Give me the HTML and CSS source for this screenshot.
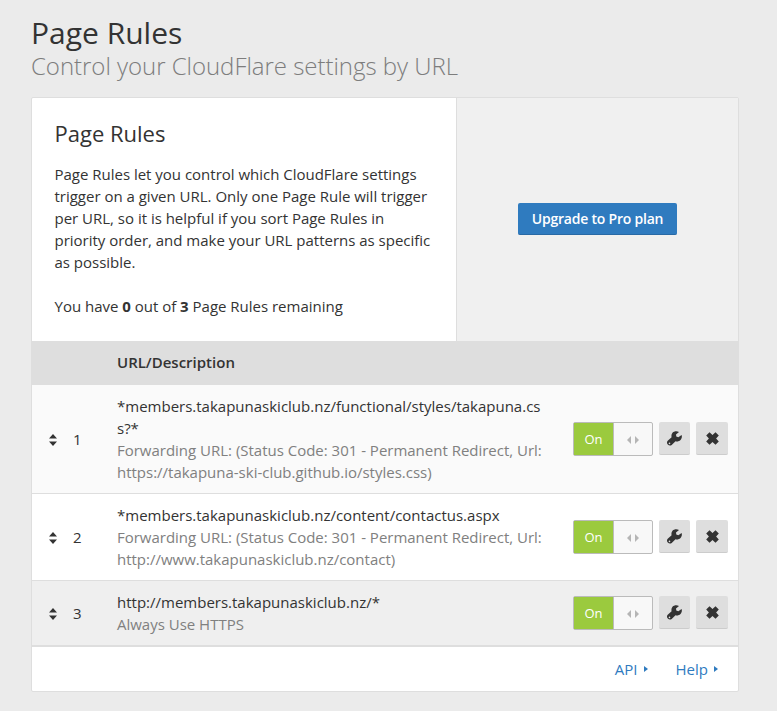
FILE: index.html
```html
<!DOCTYPE html>
<html lang="en">
<head>
<meta charset="utf-8">
<title>Page Rules</title>
<link rel="stylesheet" href="styles.css">
</head>
<body>
<svg class="defs" width="0" height="0">
  <symbol id="sort" viewBox="0 0 8 12"><path d="M0 4.500 4 0l4 4.500zM0 7.500h8l-4 4.500z"/></symbol>
  <symbol id="slide" viewBox="0 0 12 8"><path d="M4 0v8L0 4zM8 0v8l4-4z"/></symbol>
  <symbol id="caret" viewBox="0 0 4 6"><path d="M0 0v6l4-3z"/></symbol>
  <symbol id="wrench" viewBox="0 0 15 15"><path d="M14.600 3.900 11.300 6.300 9.300 5.500 9 3.600 12 .9C9.700-.2 7 .1 5.500 1.800 4.400 3.100 4.200 4.700 4.600 6.200L.7 9.800C-.3 10.800-.2 12.500.8 13.600 1.900 14.800 3.600 14.900 4.700 13.900L8.500 10.300C10.300 10.800 12.200 10.300 13.500 9 14.800 7.600 15.200 5.700 14.600 3.900zM2.500 11.600a.8.8 0 1 1 0 1.600.8.8 0 0 1 0-1.600z" fill-rule="evenodd"/></symbol>
  <symbol id="remove" viewBox="0 0 13 13"><path d="M3.500.2 6.500 2.900 9.500.2l3.300 3.300-2.700 3 2.700 3-3.300 3.300-3-2.700-3 2.700L.2 9.500l2.700-3-2.700-3z"/></symbol>
</svg>
<header class="page-head">
  <h1>Page Rules</h1>
  <p>Control your CloudFlare settings by URL</p>
</header>
<main class="card">
  <section class="intro">
    <div class="intro-text">
      <h2>Page Rules</h2>
      <p>Page Rules let you control which CloudFlare settings trigger on a given URL. Only one Page Rule will trigger per URL, so it is helpful if you sort Page Rules in priority order, and make your URL patterns as specific as possible.</p>
      <p>You have <b>0</b> out of <b>3</b> Page Rules remaining</p>
    </div>
    <div class="intro-action"><button class="upgrade">Upgrade to Pro plan</button></div>
  </section>
  <div class="rules">
    <div class="rules-head">URL/Description</div>
    <div class="rule first">
      <svg class="sort"><use href="#sort"/></svg><span class="num">1</span>
      <div class="desc"><div>*members.takapunaskiclub.nz/functional/styles/takapuna.css?*</div><div class="muted">Forwarding URL: (Status Code: 301 - Permanent Redirect, Url: https://takapuna-ski-club.github.io/styles.css)</div></div>
      <div class="toggle"><span class="on">On</span><span class="knob"><svg><use href="#slide"/></svg></span></div>
      <button class="tool edit"><svg class="wrench"><use href="#wrench"/></svg></button>
      <button class="tool del"><svg class="remove"><use href="#remove"/></svg></button>
    </div>
    <div class="rule">
      <svg class="sort"><use href="#sort"/></svg><span class="num">2</span>
      <div class="desc"><div>*members.takapunaskiclub.nz/content/contactus.aspx</div><div class="muted">Forwarding URL: (Status Code: 301 - Permanent Redirect, Url: http://www.takapunaskiclub.nz/contact)</div></div>
      <div class="toggle"><span class="on">On</span><span class="knob"><svg><use href="#slide"/></svg></span></div>
      <button class="tool edit"><svg class="wrench"><use href="#wrench"/></svg></button>
      <button class="tool del"><svg class="remove"><use href="#remove"/></svg></button>
    </div>
    <div class="rule hover">
      <svg class="sort"><use href="#sort"/></svg><span class="num">3</span>
      <div class="desc"><div>http://members.takapunaskiclub.nz/*</div><div class="muted">Always Use HTTPS</div></div>
      <div class="toggle"><span class="on">On</span><span class="knob"><svg><use href="#slide"/></svg></span></div>
      <button class="tool edit"><svg class="wrench"><use href="#wrench"/></svg></button>
      <button class="tool del"><svg class="remove"><use href="#remove"/></svg></button>
    </div>
  </div>
  <footer class="links">
    <a>API<svg><use href="#caret"/></svg></a>
    <a>Help<svg><use href="#caret"/></svg></a>
  </footer>
</main>
</body>
</html>
```
FILE: styles.css
```css
* { box-sizing: border-box; }
body {
  margin: 0;
  padding: 15px 38px 0 31px;
  height: 711px;
  overflow: hidden;
  background: #ebebeb;
  color: #333;
  font: 15px/22px "Open Sans", sans-serif;
}
h1, h2, p { margin: 0; font-weight: 400; }
svg { display: block; fill: currentColor; }
.defs { position: absolute; }
.page-head { height: 82px; }
h1 { font-size: 30px; line-height: 36px; }
.page-head p { font-size: 24px; line-height: 30px; font-weight: 300; color: #7d7d7d; letter-spacing: -0.03px; }
.card { width: 708px; background: #fff; border: 1px solid #dedede; border-radius: 2px; }
.intro { display: flex; height: 243px; }
.intro-text { width: 425px; padding: 20px 22.500px 0; border-right: 1px solid #dedede; }
.intro-text, .intro-action { flex: none; }
h2 { font-size: 22px; line-height: 30px; margin-bottom: 15px; }
.intro-text p { margin-bottom: 22px; letter-spacing: -0.01px; }
.intro-action { width: 281px; display: flex; align-items: center; justify-content: center; background: #f0f0f0; padding-bottom: 2px; }
button { border: 0; padding: 0; font: inherit; }
.upgrade {
  width: 159px;
  height: 32px;
  padding-top: 1px;
  border-radius: 2px;
  border-bottom: 1px solid #2869a5;
  background: #2f7bbf;
  color: #fff;
  font-size: 14px;
  font-weight: 600;
  letter-spacing: -0.22px;
}
.rules-head { height: 44px; padding-left: 85px; line-height: 43px; font-weight: 600; background: #dedede; }
.rule { display: flex; align-items: center; padding: 10px 10px 10px 17px; border-bottom: 1px solid #dedede; }
.first { background: #fafafa; }
.hover { background: #efefef; }
.sort { width: 8px; height: 12px; position: relative; top: 1px; }
.num { width: 44px; margin-left: 16px; }
.desc { width: 426px; margin-right: 30px; overflow-wrap: anywhere; }
.muted { color: #808080; letter-spacing: -0.01px; }
.toggle { display: flex; width: 80px; height: 34px; border: 1px solid #bbb; border-radius: 2px; background: #f8f8f8; margin-right: 6px; }
.on { width: 39px; background: #9bca3e; color: #fff; font-size: 13px; line-height: 32px; text-align: center; }
.knob { flex: 1; display: grid; place-items: center; border-left: 1px solid #bbb; color: #b5b5b5; }
.knob svg { width: 12px; height: 8px; position: relative; top: 1px; }
.tool { height: 33px; border-radius: 2px; background: #dedede; border-bottom: 1px solid #ccc; display: grid; place-items: center; color: #333; margin-bottom: 1px; }
.edit { width: 31px; margin-right: 6px; }
.del { width: 32px; }
.wrench { width: 15px; height: 15px; }
.remove { width: 13px; height: 13px; }
.links { display: flex; justify-content: flex-end; gap: 28px; height: 45px; padding: 0 20px 1px 0; border-top: 1px solid #dedede; align-items: center; color: #2f7bbf; }
.links a { display: flex; align-items: center; gap: 6px; }
.links svg { width: 4px; height: 6px; }
```
